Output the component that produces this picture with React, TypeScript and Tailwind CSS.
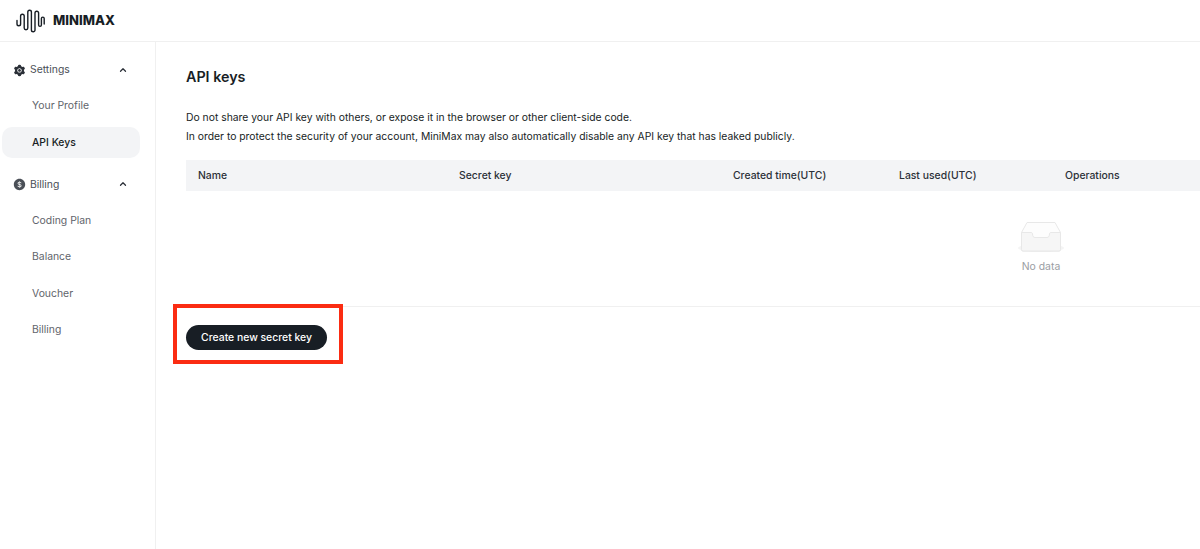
import { ChevronUp } from "lucide-react";
import { AiFillSetting, AiFillDollarCircle } from "react-icons/ai";

function Logo() {
  return (
    <svg width="30" height="24" viewBox="0 0 30 24" fill="none" stroke="#181e25" strokeWidth="1.4" strokeLinecap="round" strokeLinejoin="round">
      <path d="M1 11.500v3.500a1.800 1.800 0 0 0 3.600 0V7a1.800 1.800 0 0 1 3.600 0v12a1.800 1.800 0 0 0 3.600 0V3a1.800 1.800 0 0 1 3.600 0v18a1.800 1.800 0 0 0 3.600 0V4a1.800 1.800 0 0 1 3.600 0v12a1.400 1.400 0 0 0 2.800 0V9.500a1.400 1.400 0 0 1 2.800 0V15" />
    </svg>
  );
}

function GroupTitle({ icon, label }: { icon: React.ReactNode; label: string }) {
  return (
    <div className="flex h-[36px] items-center pl-[13px] pr-[27px] text-[#4a4f57]">
      <span className="flex w-[17px] shrink-0">{icon}</span>
      <span className="flex-1">{label}</span>
      <ChevronUp size={10} strokeWidth={3} className="text-[#2b3038]" />
    </div>
  );
}

function Item({ label, active }: { label: string; active?: boolean }) {
  return (
    <div
      className={
        active
          ? "my-[3px] ml-[2px] mr-[15px] flex h-[31px] items-center rounded-[10px] bg-[#f3f4f6] pl-[30px] font-medium text-[#181e25]"
          : "flex h-[36.4px] items-center pl-[32px] text-[#5f646b]"
      }
    >
      {label}
    </div>
  );
}

function EmptyBox() {
  return (
    <svg width="48" height="32" viewBox="0 0 48 32" fill="none">
      <ellipse cx="24" cy="26" rx="23" ry="4" fill="#f4f4f4" />
      <path d="M10 .5h28l5.500 10V27.500a1.500 1.500 0 0 1-1.500 1.500H6a1.500 1.500 0 0 1-1.500-1.500V10.500L10 .5z" fill="#fdfdfd" stroke="#e8e8e8" />
      <path d="M4.500 10.500h9.500c1 0 1.500.5 1.500 1.500 0 2 1 3.500 2.500 3.500h12c1.500 0 2.500-1.500 2.500-3.500 0-1 .5-1.500 1.500-1.500h9.500V27.500a1.500 1.500 0 0 1-1.500 1.500H6a1.500 1.500 0 0 1-1.500-1.500V10.500z" fill="#f6f6f6" stroke="#e8e8e8" />
    </svg>
  );
}

export default function App() {
  return (
    <div className="flex h-[549px] w-[1200px] flex-col overflow-hidden bg-white font-['Inter',sans-serif] text-[10.4px] text-[#181e25]">
      <header className="flex h-[42px] shrink-0 items-center gap-[7px] border-b border-[#f0f0f0] pl-[16px]">
        <Logo />
        <span className="text-[13px] font-extrabold text-[#181e25]">MINIMAX</span>
      </header>
      <div className="flex min-h-0 flex-1">
        <aside className="w-[156px] shrink-0 border-r border-[#f0f0f0] pt-[10px]">
          <GroupTitle icon={<AiFillSetting size={13} color="#2b3038" />} label="Settings" />
          <Item label="Your Profile" />
          <Item label="API Keys" active />
          <div className="mt-[8px]">
            <GroupTitle icon={<AiFillDollarCircle size={13} color="#4a4f57" />} label="Billing" />
          </div>
          <Item label="Coding Plan" />
          <Item label="Balance" />
          <Item label="Voucher" />
          <Item label="Billing" />
        </aside>
        <main className="min-w-0 flex-1 pl-[30px] pt-[24px]">
          <h1 className="text-[14.300px] font-semibold leading-[22px] text-[#181e25]">API keys</h1>
          <div className="mt-[20px] text-[10.350px] leading-[19px] text-[#181e25]">
            <p>Do not share your API key with others, or expose it in the browser or other client-side code.</p>
            <p>In order to protect the security of your account, MiniMax may also automatically disable any API key that has leaked publicly.</p>
          </div>
          <div className="mt-[14px] border-b border-[#f0f0f0]">
            <div className="grid h-[31px] grid-cols-[261px_274px_166px_166px_1fr] items-center bg-[#f3f4f6] pl-[12px] font-medium text-[#2b3038]">
              <span>Name</span>
              <span>Secret key</span>
              <span>Created time(UTC)</span>
              <span>Last used(UTC)</span>
              <span>Operations</span>
            </div>
            <div className="flex h-[115px] flex-col items-center pl-[696px] pt-[31px]">
              <EmptyBox />
              <span className="mt-[5px] text-[#9a9da3]">No data</span>
            </div>
          </div>
          <div className="relative mt-[18px] w-fit">
            <button className="flex h-[25px] w-[141px] items-center justify-center rounded-full bg-[#181e25] font-medium text-white">
              Create new secret key
            </button>
            <div className="absolute -bottom-[14px] -left-[13px] -right-[16px] -top-[21px] border-4 border-[#fb2c12]" />
          </div>
        </main>
      </div>
    </div>
  );
}
